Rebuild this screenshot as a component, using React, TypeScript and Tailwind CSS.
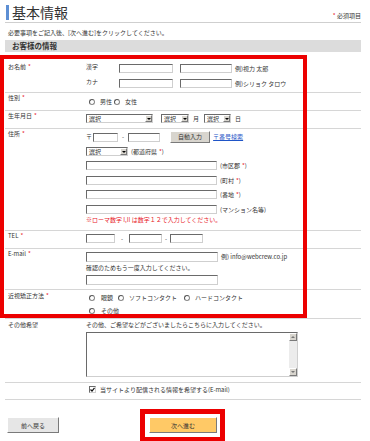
import React from "react";

const inset =
  "border border-t-[#6a6a6a] border-l-[#6a6a6a] border-b-[#cfcfcf] border-r-[#cfcfcf] bg-white";
const outset =
  "border border-t-white border-l-white border-b-[#7a7a7a] border-r-[#7a7a7a]";

function Input({ cls }: { cls: string }) {
  return <input className={`${cls} ${inset} p-0 outline-none block`} />;
}

function Select({ cls }: { cls: string }) {
  return (
    <div className={`${cls} h-[9px] flex items-center ${inset}`}>
      <span className="flex-1 pl-[2px] leading-[7px] text-[6px]">選択</span>
      <span
        className={`w-[7px] h-[7px] bg-[#d8d5ce] flex items-center justify-center ${outset}`}
      >
        <span className="w-0 h-0 border-l-[2px] border-r-[2px] border-t-[2px] border-l-transparent border-r-transparent border-t-black" />
      </span>
    </div>
  );
}

function Radio() {
  return (
    <span className="block w-[6px] h-[6px] rounded-full border border-[#8a8a8a] border-t-[#555] border-l-[#555] bg-white shrink-0" />
  );
}

function Req() {
  return <span className="text-[#e8202a] ml-[2px]">*</span>;
}

function Row({
  h,
  label,
  req,
  lpt,
  children,
}: {
  h: string;
  label?: string;
  req?: boolean;
  lpt: string;
  children: React.ReactNode;
}) {
  return (
    <div className={`flex border-b border-[#d6d6d6] ${h}`}>
      <div className={`w-[81px] shrink-0 pl-[3px] leading-[8px] ${lpt}`}>
        {label}
        {req && <Req />}
      </div>
      <div className="flex-1 flex flex-col">{children}</div>
    </div>
  );
}

export default function App() {
  return (
    <div className="relative w-[370px] h-[441px] overflow-hidden bg-white text-[6px] text-[#333] font-['Noto_Sans_CJK_JP',sans-serif]">
      <div className="ml-[5px] w-[356px]">
        {/* Title */}
        <div className="h-[23px] pt-[5px] flex justify-between border-b border-[#cfcfcf]">
          <div className="ml-[1px] border-l-[3px] border-[#5d8fd4] h-[15px] pl-[3px] text-[14px] leading-[15px] text-[#333]">
            基本情報
          </div>
          <div className="self-end mb-[2px] leading-[8px]">
            <span className="text-[#e8202a]">*</span> 必須項目
          </div>
        </div>
        <div className="mt-[6px] ml-[3px] leading-[8px]">
          必要事項をご記入後、[次へ進む]をクリックしてください。
        </div>
        <div className="mt-[3px] h-[12px] bg-[#dcdcdc] pl-[7px] text-[7.5px] leading-[12px] font-bold text-[#333]">
          お客様の情報
        </div>

        <div className="mt-[9px]">
          {/* Name */}
          <Row h="h-[32px]" label="お名前" req lpt="pt-[2px]">
            <div className="pt-[3px] flex flex-col gap-[6px]">
              <div className="flex items-center h-[9px]">
                <span className="w-[33px] self-start leading-[6px]">漢字</span>
                <Input cls="w-[54px] h-[9px]" />
                <Input cls="w-[52px] h-[9px] ml-[7px]" />
                <span className="ml-[3px]">例)視力 太郎</span>
              </div>
              <div className="flex items-center h-[9px]">
                <span className="w-[33px] self-start leading-[6px]">カナ</span>
                <Input cls="w-[54px] h-[9px]" />
                <Input cls="w-[52px] h-[9px] ml-[7px]" />
                <span className="ml-[3px]">例)シリョク タロウ</span>
              </div>
            </div>
          </Row>

          {/* Gender */}
          <Row h="h-[18px]" label="性別" req lpt="pt-[1px]">
            <div className="pt-[5px] pl-[3px] flex items-center h-[13px] leading-[8px]">
              <Radio />
              <span className="ml-[5px]">男性</span>
              <span className="ml-[2px]" />
              <Radio />
              <span className="ml-[5px]">女性</span>
            </div>
          </Row>

          {/* Birthday */}
          <Row h="h-[18px]" label="生年月日" req lpt="pt-[1px]">
            <div className="pt-[3px] flex items-center leading-[8px]">
              <Select cls="w-[67px]" />
              <Select cls="w-[28px] ml-[8px]" />
              <span className="ml-[4px]">月</span>
              <Select cls="w-[27px] ml-[5px]" />
              <span className="ml-[4px]">日</span>
            </div>
          </Row>

          {/* Address */}
          <Row h="h-[102px]" label="住所" req lpt="pt-[1px]">
            <div className="pt-[2px] flex flex-col leading-[8px]">
              <div className="flex items-center h-[12px]">
                <span>〒</span>
                <Input cls="w-[25px] h-[9px] ml-[1px]" />
                <span className="mx-[4px]">-</span>
                <Input cls="w-[32px] h-[9px]" />
                <div
                  className={`ml-[10px] w-[40px] h-[12px] bg-[#d8d5ce] flex items-center justify-center ${outset}`}
                >
                  自動入力
                </div>
                <span className="ml-[3px] text-[#1f55c7] underline">〒番号検索</span>
              </div>
              <div className="mt-[4px] flex items-center h-[9px]">
                <Select cls="w-[42px]" />
                <span className="ml-[3px]">
                  (都道府県<Req />)
                </span>
              </div>
              <div className="mt-[5px] flex items-center h-[9px]">
                <Input cls="w-[131px] h-[9px]" />
                <span className="ml-[3px]">
                  (市区郡<Req />)
                </span>
              </div>
              <div className="mt-[6px] flex items-center h-[9px]">
                <Input cls="w-[131px] h-[9px]" />
                <span className="ml-[3px]">
                  (町村<Req />)
                </span>
              </div>
              <div className="mt-[5px] flex items-center h-[9px]">
                <Input cls="w-[131px] h-[9px]" />
                <span className="ml-[3px]">
                  (番地<Req />)
                </span>
              </div>
              <div className="mt-[6px] flex items-center h-[9px]">
                <Input cls="w-[131px] h-[9px]" />
                <span className="ml-[3px]">(マンション名等)</span>
              </div>
              <div className="mt-[2px] text-[#e8202a]">
                ※ローマ数字 I,II は数字１２で入力してください。
              </div>
            </div>
          </Row>

          {/* TEL */}
          <Row h="h-[18px]" label="TEL" req lpt="pt-[1px]">
            <div className="pt-[3px] flex items-center h-[12px] leading-[8px]">
              <Input cls="w-[29px] h-[9px]" />
              <span className="mx-[6px]">-</span>
              <Input cls="w-[33px] h-[9px]" />
              <span className="mx-[3px]">-</span>
              <Input cls="w-[33px] h-[9px]" />
            </div>
          </Row>

          {/* Email */}
          <Row h="h-[41px]" label="E-mail" req lpt="pt-[1px]">
            <div className="pt-[3px] flex flex-col leading-[8px]">
              <div className="flex items-center h-[10px]">
                <Input cls="w-[132px] h-[10px]" />
                <span className="ml-[3px]">例) info@webcrew.co.jp</span>
              </div>
              <div className="mt-[2px]">確認のためもう一度入力してください。</div>
              <Input cls="w-[132px] h-[10px] mt-[3px]" />
            </div>
          </Row>

          {/* Vision */}
          <Row h="h-[29px]" label="近視矯正方法" req lpt="pt-[2px]">
            <div className="pt-[4px] pl-[3px] flex flex-col leading-[8px]">
              <div className="flex items-center h-[8px]">
                <Radio />
                <span className="ml-[6px]">眼鏡</span>
                <span className="ml-[5px]" />
                <Radio />
                <span className="ml-[5px]">ソフトコンタクト</span>
                <span className="ml-[7px]" />
                <Radio />
                <span className="ml-[5px]">ハードコンタクト</span>
              </div>
              <div className="mt-[5px] flex items-center h-[8px]">
                <Radio />
                <span className="ml-[6px]">その他</span>
              </div>
            </div>
          </Row>

          {/* Other */}
          <Row h="h-[64px]" label="その他希望" lpt="pt-[2px]">
            <div className="pt-[2px] flex flex-col leading-[8px]">
              <div>その他、ご希望などがございましたらこちらに入力してください。</div>
              <div className={`mt-[3px] w-[212px] h-[45px] flex justify-end ${inset}`}>
                <div className="w-[8px] h-full bg-[#ececec] flex flex-col justify-between">
                  <div
                    className={`w-[8px] h-[8px] bg-[#d8d5ce] flex items-center justify-center ${outset}`}
                  >
                    <span className="w-0 h-0 border-l-[2px] border-r-[2px] border-b-[2px] border-l-transparent border-r-transparent border-b-[#777]" />
                  </div>
                  <div
                    className={`w-[8px] h-[8px] bg-[#d8d5ce] flex items-center justify-center ${outset}`}
                  >
                    <span className="w-0 h-0 border-l-[2px] border-r-[2px] border-t-[2px] border-l-transparent border-r-transparent border-t-[#777]" />
                  </div>
                </div>
              </div>
            </div>
          </Row>

          {/* Checkbox */}
          <Row h="h-[17px]" lpt="pt-[1px]">
            <div className="pt-[3px] pl-[3px] flex items-center h-[10px] leading-[8px]">
              <span className={`w-[7px] h-[7px] flex items-center justify-center ${inset}`}>
                <svg width="5" height="5" viewBox="0 0 5 5">
                  <polyline
                    points="0.5,2.5 2,4 4.5,0.8"
                    fill="none"
                    stroke="#111"
                    strokeWidth="1.2"
                  />
                </svg>
              </span>
              <span className="ml-[4px]">当サイトより配信される情報を希望する(E-mail)</span>
            </div>
          </Row>
        </div>

        {/* Buttons */}
        <div className="mt-[17px] flex">
          <div
            className={`ml-[2px] w-[52px] h-[16px] bg-[#e6e6e6] flex items-center justify-center ${outset}`}
          >
            前へ戻る
          </div>
          <div
            className={`ml-[90px] w-[68px] h-[16px] bg-[#ffc966] flex items-center justify-center ${outset}`}
          >
            次へ進む
          </div>
        </div>
      </div>

      {/* Red highlight overlays */}
      <div className="absolute left-0 top-[55px] w-[307px] h-[263px] border-[4px] border-[#ec0000] pointer-events-none" />
      <div className="absolute left-[140px] top-[409px] w-[85px] h-[33px] border-[5px] border-[#ec0000] pointer-events-none" />
    </div>
  );
}
